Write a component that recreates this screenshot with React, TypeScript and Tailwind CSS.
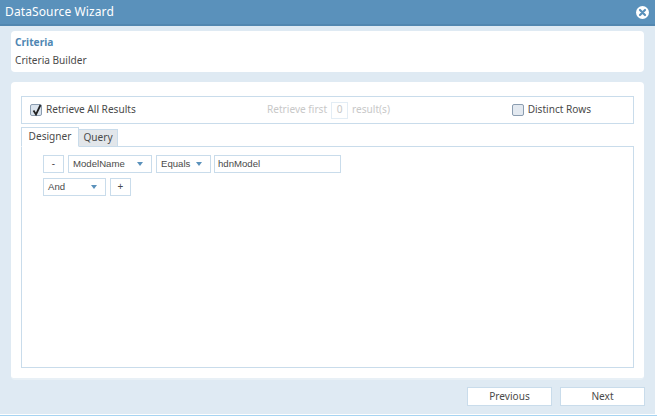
import React from "react";

const Caret = () => (
  <span className="w-0 h-0 border-l-[3.5px] border-r-[3.5px] border-t-[4px] border-l-transparent border-r-transparent border-t-[#5a91bb]" />
);

const Select = ({ label, w }: { label: string; w: string }) => (
  <div className={`${w} h-[18px] bg-white border border-[#c9dceb] flex items-center justify-between pl-[4px] pr-[8px] text-[#4a4a4a] font-['Liberation_Sans',sans-serif] text-[9.6px]`}>
    <span>{label}</span>
    <Caret />
  </div>
);

const SmallBtn = ({ label }: { label: string }) => (
  <div className="w-[21px] h-[18px] bg-white border border-[#c9dceb] flex items-center justify-center text-[#4a4a4a]">{label}</div>
);

const NavBtn = ({ label }: { label: string }) => (
  <div className="w-[85px] h-[19px] bg-white border border-[#c9dceb] flex items-center justify-center text-[#4a4a4a]">{label}</div>
);

export default function App() {
  return (
    <div className="w-[657px] h-[416px] bg-white overflow-hidden font-['Noto_Sans','Liberation_Sans',sans-serif] text-[10.1px]">
      <div className="w-[655px] h-[414px] bg-[#dfeaf3] flex flex-col">
        <div className="h-[26px] shrink-0 bg-[#5a91bb] border-b-2 border-b-[#5287b0] flex items-center justify-between pl-[5px] pr-[6px]">
          <span className="text-white text-[12px] tracking-[0.12px] leading-[26px]">DataSource Wizard</span>
          <svg width="13" height="13" viewBox="0 0 13 13">
            <circle cx="6.5" cy="6.5" r="6.5" fill="#fff" />
            <path d="M4 4l5 5M9 4l-5 5" stroke="#5a91bb" strokeWidth="2.2" strokeLinecap="round" />
          </svg>
        </div>

        <div className="ml-[11px] w-[633px] h-[41px] mt-[5px] shrink-0 bg-white rounded-[4px] pl-[4px] pt-[5px] flex flex-col gap-[5px]">
          <div className="text-[#4f87b3] font-bold h-[13px] leading-[13px] text-[10.2px]">Criteria</div>
          <div className="text-[#4a4a4a] h-[13px] leading-[13px]">Criteria Builder</div>
        </div>

        <div className="ml-[11px] w-[633px] h-[298px] mt-[10px] shrink-0 bg-white rounded-[4px] border-b-2 border-b-[#e8f0f6] px-[10px] pt-[14px] flex flex-col">
          <div className="h-[28px] shrink-0 border border-[#c9dceb] flex items-center pl-[8px] pr-[42px] text-[#4a4a4a]">
            <div className="flex items-center gap-[4px] w-[237px]">
              <div className="w-[12px] h-[12px] rounded-[2px] bg-[#dbe4ee] border border-[#8b9db0] relative">
                <svg className="absolute -top-[2px] left-0" width="12" height="14" viewBox="0 0 12 14">
                  <path d="M2.5 7.5L5 11.5L9.5 2" fill="none" stroke="#222" strokeWidth="1.8" />
                </svg>
              </div>
              <span>Retrieve All Results</span>
            </div>
            <div className="flex items-center gap-[4px] text-[#c8c8c8]">
              <span>Retrieve first</span>
              <div className="w-[17px] h-[17px] border border-[#e3edf5] flex items-center justify-center">0</div>
              <span>result(s)</span>
            </div>
            <div className="flex items-center gap-[4px] ml-auto">
              <div className="w-[12px] h-[12px] rounded-[2px] bg-[#e3e9f0] border border-[#8b9db0]" />
              <span>Distinct Rows</span>
            </div>
          </div>

          <div className="h-[20px] mt-[3px] shrink-0 flex items-end text-[#4a4a4a] relative z-10 -mb-px">
            <div className="w-[58px] h-[20px] bg-white border border-[#c9dceb] border-b-white flex items-center justify-center">Designer</div>
            <div className="w-[39px] h-[18px] bg-[#e2e6ea] border border-l-0 border-[#c9dceb] flex items-center justify-center">Query</div>
          </div>

          <div className="h-[222px] shrink-0 border border-[#c9dceb] pl-[21px] pt-[8px] flex flex-col gap-[5px] text-[#4a4a4a]">
            <div className="flex items-center gap-[4px]">
              <SmallBtn label="-" />
              <Select label="ModelName" w="w-[84px]" />
              <Select label="Equals" w="w-[55px]" />
              <div className="w-[127px] h-[18px] bg-white border border-[#c9dceb] pl-[3px] flex items-center -ml-px font-['Liberation_Sans',sans-serif] text-[9.6px]">hdnModel</div>
            </div>
            <div className="flex items-center gap-[4px]">
              <Select label="And" w="w-[63px]" />
              <SmallBtn label="+" />
            </div>
          </div>
        </div>

        <div className="mt-[7px] ml-[467px] w-[178px] flex justify-between">
          <NavBtn label="Previous" />
          <NavBtn label="Next" />
        </div>
      </div>
      <div className="h-px mt-px bg-[#a6d4f2]" />
    </div>
  );
}
